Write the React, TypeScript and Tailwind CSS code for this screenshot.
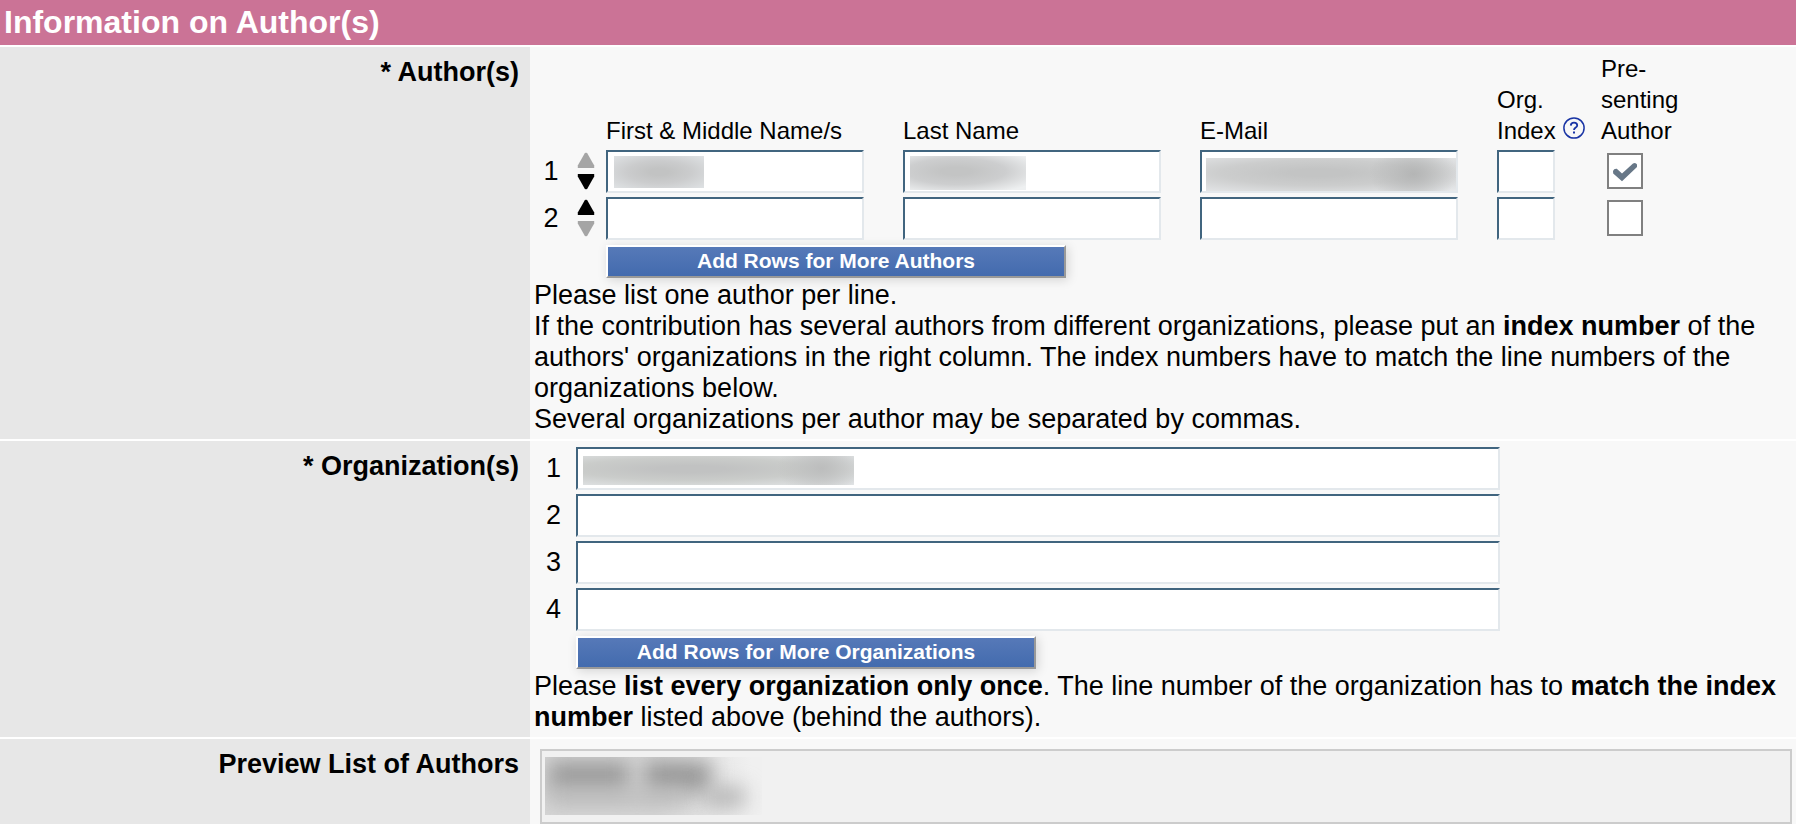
import { useState } from 'react';

const field =
  'block h-[43px] border-2 border-t-[#41657f] border-l-[#41657f] border-r-[#e3e8ec] border-b-[#e3e8ec] bg-white px-2 text-2xl outline-none';

const SortArrows = ({ row, first, last }: { row: number; first: boolean; last: boolean }) => (
  <div className="flex flex-col items-center gap-1">
    <button type="button" disabled={first} aria-label={`Move author ${row} up`} className="text-black disabled:text-[#a5a5a5]">
      <svg width="18" height="17" viewBox="0 0 18 17" className="block">
        <path d="M9 0.4 L10.4 1.6 L17.2 13.6 V16 H0.8 V13.6 L7.6 1.6 Z" fill="currentColor" />
      </svg>
    </button>
    <button type="button" disabled={last} aria-label={`Move author ${row} down`} className="text-black disabled:text-[#a5a5a5]">
      <svg width="18" height="17" viewBox="0 0 18 17" className="block">
        <path d="M9 16.6 L10.4 15.4 L17.2 3.4 V1 H0.8 V3.4 L7.6 15.4 Z" fill="currentColor" />
      </svg>
    </button>
  </div>
);

const AddButton = ({ children, onClick }: { children: string; onClick: () => void }) => (
  <button
    type="button"
    onClick={onClick}
    className="block h-[33px] w-[460px] border-2 border-t-white border-l-white border-r-[#999] border-b-[#999] bg-linear-to-b from-[#5679b8] to-[#436bae] pb-0.5 text-[21px] leading-[27px] font-bold text-white shadow-[2px_2px_10px_rgba(0,0,0,0.15)]"
  >
    {children}
  </button>
);

const Row = ({ label, children }: { label: string; children: React.ReactNode }) => (
  <section className="mt-0.5 flex">
    <h2 className="w-[530px] shrink-0 bg-[#e7e7e7] pt-2.5 pr-[11px] text-right font-bold">{label}</h2>
    <div className="min-w-0 flex-1 bg-[#f8f8f8] pt-1.5 pr-1 pb-1 pl-1">{children}</div>
  </section>
);

// Soft grey patches that hide the personal data
const masks = {
  first: 'top-1.5 left-2 h-8 w-[90px] bg-[radial-gradient(ellipse_at_50%_50%,#c2c3c3_15%,#cbcccd_50%,#dfe2e4_100%)]',
  last: 'top-1.5 left-[7px] h-[34px] w-[116px] bg-[radial-gradient(ellipse_at_40%_45%,#c3c4c4_15%,#cdcecf_50%,#eef0f1_90%)]',
  email:
    'top-2 left-1.5 h-[33px] w-[250px] bg-[radial-gradient(ellipse_44px_30px_at_83%_48%,#b4b5b5_0%,transparent_100%),radial-gradient(ellipse_at_45%_45%,#c3c4c4_15%,#cccdcd_50%,#e7e9eb_100%)]',
  org: 'top-[9px] left-[7px] h-[29px] w-[271px] bg-[radial-gradient(ellipse_44px_30px_at_88%_42%,#bcbdbd_0%,transparent_100%),radial-gradient(ellipse_at_40%_45%,#c1c2c2_15%,#caccca_50%,#e5e8ea_100%)]',
};

const Mask = ({ className }: { className: string }) => (
  <span className={`pointer-events-none absolute ${className}`} />
);

export default function App() {
  const [authors, setAuthors] = useState([true, false]);
  const [orgs, setOrgs] = useState([1, 2, 3, 4]);

  const togglePresenting = (index: number) =>
    setAuthors(prev => prev.map((value, i) => (i === index ? !value : value)));

  return (
    <main className="bg-white font-['Liberation_Sans',Arial,sans-serif] text-[27px] leading-[31px] text-black">
      <h1 className="bg-[#cb7396] py-[5px] pl-1 text-[32px] leading-[35px] font-bold text-white">Information on Author(s)</h1>

      <Row label="* Author(s)">
        <table className="mb-[5px] border-collapse">
          <thead>
            <tr className="text-left align-bottom text-2xl leading-[31px]">
              <th className="w-[34px] p-0" />
              <th className="w-[38px] p-0" />
              <th className="p-0 pr-[39px] font-normal">First &amp; Middle Name/s</th>
              <th className="p-0 pr-[39px] font-normal">Last Name</th>
              <th className="p-0 pr-[39px] font-normal">E-Mail</th>
              <th className="w-[104px] p-0 font-normal">
                Org.
                <span className="flex items-start gap-[7px]">
                  Index
                  <button type="button" aria-label="Help on organization index" className="pt-0.5 text-[#1a35a5]">
                    <svg width="22" height="22" viewBox="0 0 22 22" fill="none" stroke="currentColor" className="block">
                      <circle cx="11" cy="11" r="10.1" strokeWidth="1.5" />
                      <path d="M7.8 8.6 C7.9 6.6 9.2 5.7 11 5.7 C12.9 5.7 14.2 6.8 14.2 8.4 C14.2 10.5 11 10.6 11 13" strokeWidth="1.8" />
                      <path d="M11 14.6 V16.6" strokeWidth="2" />
                    </svg>
                  </button>
                </span>
              </th>
              <th className="p-0 font-normal">
                Pre-
                <br />
                senting
                <br />
                Author
              </th>
            </tr>
          </thead>
          <tbody>
            {authors.map((presenting, i) => (
              <tr key={i}>
                <td className="p-0 pt-1 text-center">{i + 1}</td>
                <td className="p-0 pt-1 pr-0.5 pb-0.5">
                  <SortArrows row={i + 1} first={i === 0} last={i === authors.length - 1} />
                </td>
                <td className="p-0 pt-1 pr-[39px]">
                  <div className="relative">
                    <input type="text" aria-label={`First and middle name of author ${i + 1}`} className={`w-[258px] ${field}`} />
                    {i === 0 && <Mask className={masks.first} />}
                  </div>
                </td>
                <td className="p-0 pt-1 pr-[39px]">
                  <div className="relative">
                    <input type="text" aria-label={`Last name of author ${i + 1}`} className={`w-[258px] ${field}`} />
                    {i === 0 && <Mask className={masks.last} />}
                  </div>
                </td>
                <td className="p-0 pt-1 pr-[39px]">
                  <div className="relative">
                    <input type="email" aria-label={`E-mail of author ${i + 1}`} className={`w-[258px] ${field}`} />
                    {i === 0 && <Mask className={masks.email} />}
                  </div>
                </td>
                <td className="p-0 pt-1">
                  <input type="text" aria-label={`Organization index of author ${i + 1}`} className={`w-[58px] ${field}`} />
                </td>
                <td className="p-0 pt-1 pb-0.5 pl-1.5">
                  <label className="relative block size-9">
                    <input
                      type="checkbox"
                      checked={presenting}
                      onChange={() => togglePresenting(i)}
                      aria-label={`Author ${i + 1} is presenting`}
                      className="block size-9 appearance-none border-2 border-[#808080] bg-white"
                    />
                    {presenting && (
                      <svg viewBox="0 0 36 36" className="pointer-events-none absolute inset-0 size-9">
                        <path d="M6 18 Q7 15.4 9.8 15.8 L15 20.4 L26 10.4 Q28.8 9 30 11.6 V14 L15 28.2 L6.2 20.6 Z" fill="#677787" />
                      </svg>
                    )}
                  </label>
                </td>
              </tr>
            ))}
          </tbody>
        </table>
        <div className="mb-0.5 pl-[72px]">
          <AddButton onClick={() => setAuthors([...authors, false])}>Add Rows for More Authors</AddButton>
        </div>
        <p>
          Please list one author per line.
          <br />
          If the contribution has several authors from different organizations, please put an <b>index number</b> of the
          authors' organizations in the right column. The index numbers have to match the line numbers of the
          organizations below.
          <br />
          Several organizations per author may be separated by commas.
        </p>
      </Row>

      <Row label="* Organization(s)">
        <ol className="mb-[5px] flex flex-col gap-1">
          {orgs.map(n => (
            <li key={n} className="flex items-center">
              <label htmlFor={`org-${n}`} className="w-[42px] shrink-0 pl-3">
                {n}
              </label>
              <div className="relative w-[924px]">
                <input id={`org-${n}`} type="text" className={`w-full ${field}`} />
                {n === 1 && <Mask className={masks.org} />}
              </div>
            </li>
          ))}
        </ol>
        <div className="mb-0.5 pl-[42px]">
          <AddButton onClick={() => setOrgs([...orgs, orgs.length + 1])}>Add Rows for More Organizations</AddButton>
        </div>
        <p>
          Please <b>list every organization only once</b>. The line number of the organization has to{' '}
          <b>match the index number</b> listed above (behind the authors).
        </p>
      </Row>

      <Row label="Preview List of Authors">
        <div className="-mb-1 pt-1 pl-1.5">
          <div className="border-2 border-[#ccc] bg-[#f1f1f1] px-[3px] pt-1.5 pb-[7px]">
            <div className="relative h-[58px] w-[217px] overflow-hidden bg-linear-to-r from-[#d6d6d6] from-50% to-[#f0f0f0] to-95%">
              <span className="absolute top-1 left-1 h-8 w-20 bg-[#9c9c9c] blur-[10px]" />
              <span className="absolute top-1 left-[100px] h-8 w-[66px] bg-[#999] blur-[10px]" />
              <span className="absolute top-8 left-1 h-4 w-[140px] bg-[#bcbcbc] blur-[10px]" />
              <span className="absolute top-[30px] left-[160px] h-5 w-10 bg-[#b4b4b4] blur-[10px]" />
            </div>
          </div>
        </div>
      </Row>
    </main>
  );
}
